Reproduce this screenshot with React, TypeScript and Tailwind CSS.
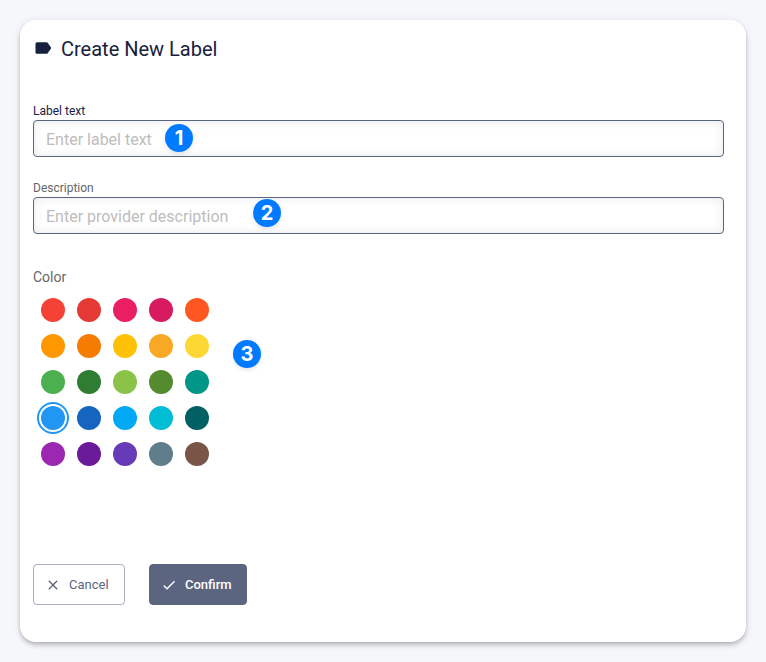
import React, { useState } from "react";

const COLORS = [
  "#f44336", "#e53935", "#e91e63", "#d81b60", "#ff5722",
  "#ff9800", "#f57c00", "#ffc107", "#f9a825", "#fdd835",
  "#4caf50", "#2e7d32", "#8bc34a", "#558b2f", "#009688",
  "#2196f3", "#1565c0", "#03a9f4", "#00bcd4", "#006064",
  "#9c27b0", "#6a1b9a", "#673ab7", "#607d8b", "#795548",
];

function Step({ n, className }: { n: number; className: string }) {
  return (
    <span
      className={
        "pointer-events-none absolute flex size-7 items-center justify-center rounded-full bg-[#007bff] font-['Inter','Liberation_Sans',sans-serif] text-xl font-bold text-white shadow-[0_2px_4px_rgba(0,0,0,0.1)] " +
        className
      }
    >
      {n}
    </span>
  );
}

type FieldProps = {
  id: string;
  label: string;
  placeholder: string;
  labelClass: string;
  step: React.ReactNode;
};

function Field({ id, label, placeholder, labelClass, step }: FieldProps) {
  return (
    <div className="flex flex-col gap-px">
      <label htmlFor={id} className={"text-xs leading-4 " + labelClass}>
        {label}
      </label>
      <div className="relative">
        <input
          id={id}
          type="text"
          placeholder={placeholder}
          className="block h-[37px] w-full rounded border border-[#5c6580] bg-white px-3 pt-0.5 text-base text-[#16213e] shadow-[inset_0_0_10px_rgba(92,101,128,0.15)] outline-none placeholder:text-[#bdbdbd]"
        />
        {step}
      </div>
    </div>
  );
}

export default function App() {
  const [color, setColor] = useState("#2196f3");

  return (
    <main className="min-h-screen bg-[#f5f7fb] p-5 font-['Roboto','Liberation_Sans',sans-serif]">
      <form
        onSubmit={(e) => e.preventDefault()}
        className="rounded-2xl bg-white pt-3 pr-[22px] pb-[37px] pl-[13px] shadow-[0_2px_4px_-1px_rgba(0,0,0,0.2),0_4px_5px_rgba(0,0,0,0.1),0_1px_10px_rgba(0,0,0,0.08)]"
      >
        <header className="flex h-[34px] items-center gap-2 text-[#16213e]">
          <svg viewBox="0 0 24 24" className="mb-0.5 size-5" fill="currentColor" aria-hidden="true">
            <path d="M17.63 5.84C17.27 5.33 16.67 5 16 5L5 5.01C3.9 5.01 3 5.9 3 7v10c0 1.1.9 1.99 2 1.99L16 19c.67 0 1.27-.33 1.63-.84L22 12l-4.37-6.16z" />
          </svg>
          <h1 className="text-xl">Create New Label</h1>
        </header>

        <div className="mt-[37px] flex flex-col gap-[23px]">
          <Field
            id="label-text"
            label="Label text"
            placeholder="Enter label text"
            labelClass="text-[#16213e]"
            step={<Step n={1} className="top-1 left-[132px]" />}
          />
          <Field
            id="description"
            label="Description"
            placeholder="Enter provider description"
            labelClass="text-[#666666]"
            step={<Step n={2} className="top-0.5 left-[220px]" />}
          />
        </div>

        <fieldset className="mt-[33px]">
          <legend className="text-sm leading-5 text-[#666666]">Color</legend>
          <div className="relative mt-[11px] ml-2 grid w-fit grid-cols-5 gap-3">
            {COLORS.map((c) => (
              <input
                key={c}
                type="radio"
                name="color"
                value={c}
                aria-label={c}
                checked={color === c}
                onChange={() => setColor(c)}
                style={{ backgroundColor: c, outlineColor: c }}
                className="size-6 cursor-pointer appearance-none rounded-full checked:outline-2 checked:outline-offset-2"
              />
            ))}
            <Step n={3} className="top-[42px] left-48" />
          </div>
        </fieldset>

        <div className="mt-[98px] flex gap-6">
          <button
            type="button"
            className="flex h-[41px] w-[92px] items-center gap-2 rounded border border-[#a9aec0] bg-white pl-[11px] text-[13px] text-[#5c6580]"
          >
            <svg viewBox="0 0 24 24" className="size-4" fill="currentColor" aria-hidden="true">
              <path d="M19 6.41 17.59 5 12 10.59 6.41 5 5 6.41 10.59 12 5 17.59 6.41 19 12 13.41 17.59 19 19 17.59 13.41 12z" />
            </svg>
            Cancel
          </button>
          <button
            type="submit"
            className="flex h-[41px] w-[98px] items-center gap-2 rounded border border-[#5c6580] bg-[#5c6580] pl-[11px] text-[13px] font-medium text-white"
          >
            <svg viewBox="0 0 24 24" className="size-4" fill="currentColor" aria-hidden="true">
              <path d="M9 16.17 4.83 12l-1.42 1.41L9 19 21 7l-1.41-1.41z" />
            </svg>
            Confirm
          </button>
        </div>
      </form>
    </main>
  );
}
